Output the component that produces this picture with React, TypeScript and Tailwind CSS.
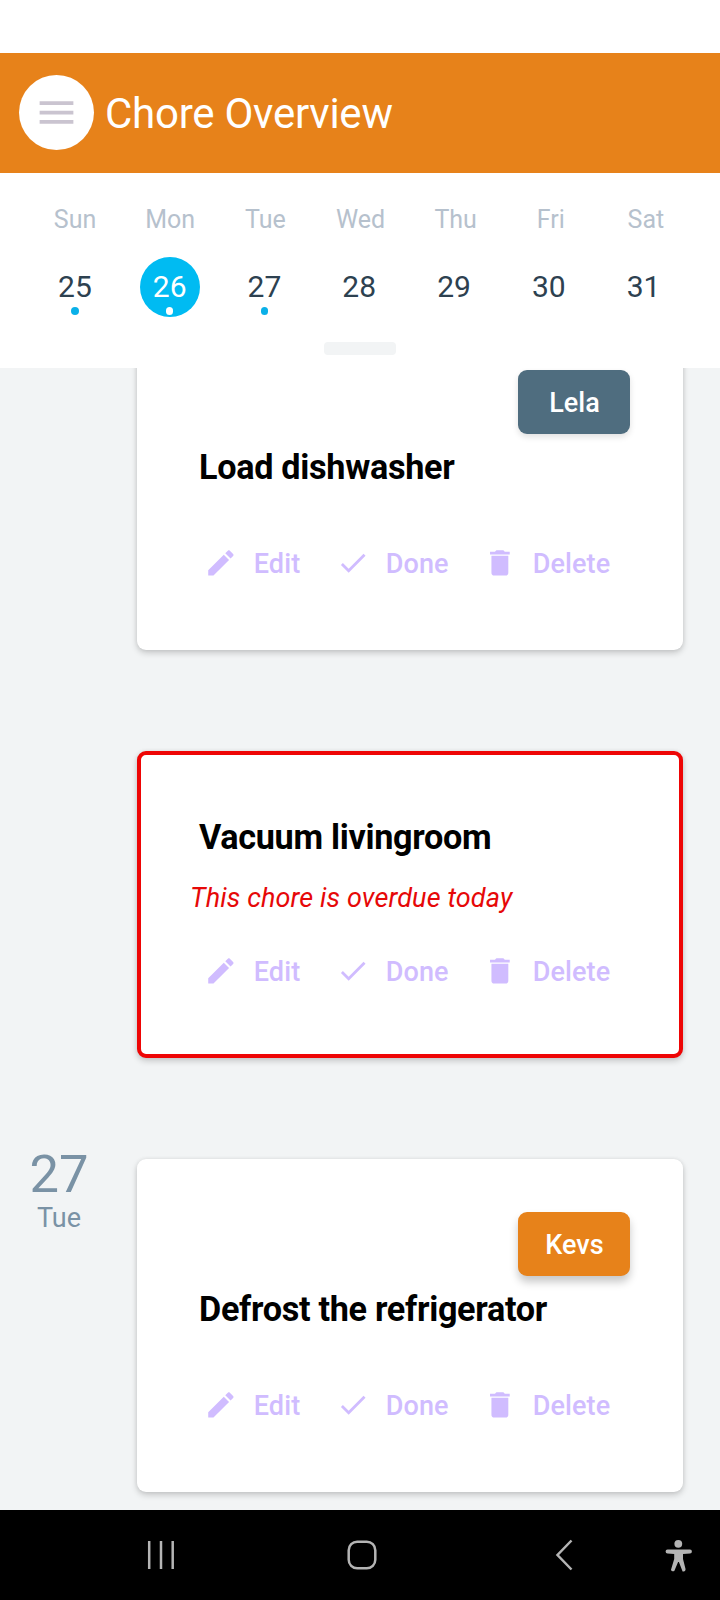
import React from "react";

const PENCIL =
  "M20.71,7.04C21.1,6.65 21.1,6 20.71,5.63L18.37,3.29C18,2.9 17.35,2.9 16.96,3.29L15.12,5.12L18.87,8.87M3,17.25V21H6.75L17.81,9.93L14.06,6.18L3,17.25Z";
const CHECK = "M21,7L9,19L3.5,13.5L4.91,12.09L9,16.17L19.59,5.59L21,7Z";
const TRASH =
  "M19,4H15.5L14.5,3H9.5L8.5,4H5V6H19M6,19A2,2 0 0,0 8,21H16A2,2 0 0,0 18,19V7H6V19Z";

function Icon({ path, className }: { path: string; className: string }) {
  return (
    <svg viewBox="0 0 24 24" fill="currentColor" className={className}>
      <path d={path} />
    </svg>
  );
}

function Action({ path, label, className }: { path: string; label: string; className: string }) {
  return (
    <button className={`flex h-[34px] items-center gap-[16px] ${className}`}>
      <Icon path={path} className="mb-[3px] size-[33.75px] shrink-0" />
      <span className="text-[27px] leading-[34px] font-medium tracking-[0.1px]">{label}</span>
    </button>
  );
}

function Actions() {
  return (
    <div className="flex pl-[67px] text-[#d0bcff]">
      <Action path={PENCIL} label="Edit" className="w-[132px]" />
      <Action path={CHECK} label="Done" className="w-[147px]" />
      <Action path={TRASH} label="Delete" className="" />
    </div>
  );
}

function Badge({ name, className }: { name: string; className: string }) {
  return (
    <div
      className={`mr-[53px] flex h-16 w-28 items-center justify-center self-end rounded-[9px] pt-[2px] pl-px text-[27px] font-medium text-white ${className}`}
    >
      {name}
    </div>
  );
}

function Title({ children }: { children: string }) {
  return (
    <h2 className="pt-px pl-[62px] text-[34.2px] leading-[39px] font-bold tracking-[-0.3px] text-black">
      {children}
    </h2>
  );
}

const CARD =
  "flex w-[546px] flex-col rounded-[9px] bg-white shadow-[0_3px_6px_rgba(0,0,0,0.18),0_0_4px_rgba(0,0,0,0.07)]";

const WEEK = [
  { name: "Sun", day: 25, dot: true },
  { name: "Mon", day: 26, dot: true, selected: true },
  { name: "Tue", day: 27, dot: true },
  { name: "Wed", day: 28 },
  { name: "Thu", day: 29 },
  { name: "Fri", day: 30 },
  { name: "Sat", day: 31 },
];

export default function App() {
  return (
    <div className="flex h-[1600px] w-[720px] flex-col overflow-hidden bg-white pt-[53px] font-['Roboto',sans-serif]">
      <header className="flex h-[120px] shrink-0 items-center bg-[#e7821a] pl-[19px]">
        <button className="mb-px flex size-[75px] items-center justify-center rounded-full bg-white text-[#cac4d0]">
          <Icon
            path="M3,6H21V8H3V6M3,11H21V13H3V11M3,16H21V18H3V16Z"
            className="mb-px size-[45px]"
          />
        </button>
        <h1 className="ml-[11px] pt-px text-[42px] leading-[48px] font-normal tracking-[-0.25px] text-white">
          Chore Overview
        </h1>
      </header>

      <section className="flex h-[195px] shrink-0 flex-col pt-[32px]">
        <div className="ml-[27.5px] grid w-[666px] grid-cols-7">
          {WEEK.map((d) => (
            <div key={d.name} className="text-center text-[25px] leading-[30px] text-[#b6c1cd]">
              {d.name}
            </div>
          ))}
        </div>
        <div className="mt-[22px] ml-[27.5px] grid w-[663.5px] grid-cols-7">
          {WEEK.map((d) => (
            <div key={d.day} className="flex justify-center">
              <div
                className={`flex size-[60px] flex-col items-center rounded-full pt-3 ${
                  d.selected ? "bg-[#00bbf2] text-white" : "text-[#2d4150]"
                }`}
              >
                <span className="text-[30px] leading-9">{d.day}</span>
                {d.dot && (
                  <i
                    className={`mt-[2px] size-[7.5px] rounded-full ${d.selected ? "bg-white" : "bg-[#0ab0e8]"}`}
                  />
                )}
              </div>
            </div>
          ))}
        </div>
        <div className="mt-[25px] h-[13px] w-[72px] self-center rounded-[4px] bg-[#f2f4f5]" />
      </section>

      <main className="flex h-[1142px] shrink-0 flex-col overflow-hidden bg-[#f2f4f5]">
        <article className={`-mt-[51px] ml-[137px] h-[333px] shrink-0 pt-[53px] ${CARD}`}>
          <Badge name="Lela" className="bg-[#4f6d7f] shadow-[0_3px_6px_rgba(0,0,0,0.12)]" />
          <div className="h-[13px]" />
          <Title>Load dishwasher</Title>
          <div className="h-[60px]" />
          <Actions />
        </article>

        <article
          className={`mt-[101px] ml-[137px] h-[307px] shrink-0 border-4 border-[#ee0505] pt-[62px] ${CARD}`}
        >
          <div className="-ml-1 flex flex-col">
            <Title>Vacuum livingroom</Title>
            <p className="mt-[24px] pl-[53px] text-[27px] leading-[34px] tracking-[0.12px] text-[#e60808] italic">
              This chore is overdue today
            </p>
            <div className="h-[40px]" />
            <Actions />
          </div>
        </article>

        <div className="mt-[101px] flex">
          <div className="-mt-[18px] flex w-[137px] flex-col items-center pr-[19px] text-[#7a92a5]">
            <span className="text-[52.5px] leading-[66px]">27</span>
            <span className="-mt-[7px] text-[27px] leading-[36px]">Tue</span>
          </div>
          <article className={`h-[333px] shrink-0 pt-[53px] ${CARD}`}>
            <Badge name="Kevs" className="bg-[#e7821a] shadow-[0_6px_9px_rgba(0,0,0,0.22)]" />
            <div className="h-[13px]" />
            <Title>Defrost the refrigerator</Title>
            <div className="h-[60px]" />
            <Actions />
          </article>
        </div>
      </main>

      <nav className="h-[90px] shrink-0 bg-black">
        <svg viewBox="0 0 720 90" fill="none" stroke="#b4b4b4" strokeWidth="2.5" className="h-[90px] w-[720px]">
          <path d="M149.2 31V59M161 31V59M172.7 31V59" />
          <rect x="348.7" y="31.7" width="26.6" height="26.6" rx="8.5" />
          <path d="M571.5 30.5L557.5 45L571.5 59.5" />
          <g fill="#b4b4b4" stroke="none">
            <circle cx="678.3" cy="33.8" r="3.9" />
            <path d="M667.5 39.6H690A1.8 1.8 0 0 1 690 43.4L683 43.9V49L685.6 59.2Q685.5 62 682.6 61.4L678.9 52H678.1L674.3 61Q671.5 62 671 59.8L674.2 49V43.9L667.5 43.4A1.8 1.8 0 0 1 667.5 39.6Z" />
          </g>
        </svg>
      </nav>
    </div>
  );
}
